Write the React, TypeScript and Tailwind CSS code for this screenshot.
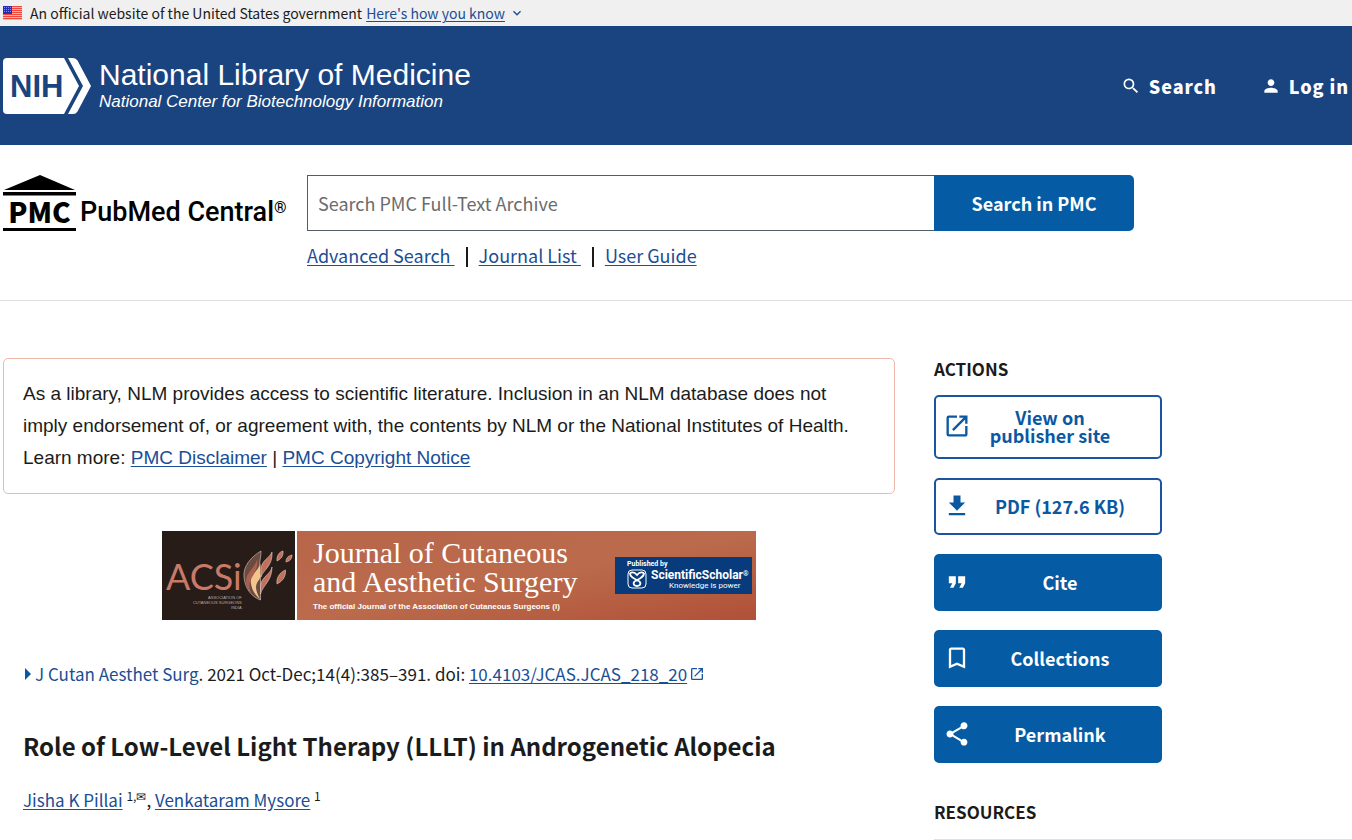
import React, { useState } from "react";
import type { IconType } from "react-icons";
import {
  MdBookmarkBorder,
  MdExpandMore,
  MdFileDownload,
  MdFormatQuote,
  MdOpenInNew,
  MdPerson,
  MdSearch,
  MdShare,
} from "react-icons/md";

interface Action {
  label: React.ReactNode;
  icon: IconType;
  outline?: boolean;
  labelStyle?: string;
}

const actions: Action[] = [
  { label: <>View on<br />publisher site</>, icon: MdOpenInNew, outline: true, labelStyle: "pl-4 pr-10" },
  { label: "PDF (127.6 KB)", icon: MdFileDownload, outline: true },
  { label: "Cite", icon: MdFormatQuote },
  { label: "Collections", icon: MdBookmarkBorder },
  { label: "Permalink", icon: MdShare },
];

const linkStyle = "text-[#1a4e95] underline underline-offset-2";

const FlagIcon = () => (
  <svg viewBox="0 0 19 14" className="w-[19px] h-3.5 shrink-0" aria-hidden="true">
    <rect width="19" height="14" fill="#fbe3df" />
    {[0, 2, 4, 6, 8, 10, 12].map(y => (
      <rect key={y} y={y} width="19" height="1.3" fill="#f0483c" />
    ))}
    <rect width="9" height="8" fill="#2a2fb0" />
    {[1, 3, 5].map(y =>
      [1, 3, 5, 7].map(x => <circle key={`${x}-${y}`} cx={x + 0.5} cy={y + 0.5} r="0.4" fill="#fff" />)
    )}
  </svg>
);

const NihLogo = () => (
  <svg viewBox="0 0 88 56" className="w-[88px] h-14 shrink-0" role="img" aria-label="NIH">
    <path d="M4 0H61L76 28L61 56H4Q0 56 0 52V4Q0 0 4 0Z" fill="#fff" />
    <path d="M65 0H70Q73 0 74.500 2.500L88 28L74.500 53.500Q73 56 70 56H65L80 28Z" fill="#fff" />
    <text x="7" y="39" fontFamily="'Liberation Sans', Arial, sans-serif" fontSize="31" fontWeight="700" fill="#1a4480">
      NIH
    </text>
  </svg>
);

const PmcRoof = () => (
  <svg viewBox="0 0 73 21" className="w-full h-[21px]" aria-hidden="true">
    <path d="M37 0L72 15H1Z" />
    <rect y="17" width="73" height="3.5" />
  </svg>
);

const FlameIcon = () => (
  <svg viewBox="0 0 52 52" className="w-[52px] h-[52px] shrink-0" aria-hidden="true">
    <g stroke="#d9cfc8" strokeWidth="0.6">
      <path d="M19 1C9 7 1 16 2 27C3 39 10 47 18.500 50V26C15 20 19 10 19 1Z" fill="#6b4a3f" />
      <path d="M30 2C28 8 19 10 19 20V27C21 20 31 16 30 2Z" fill="#c2705c" />
      <path d="M30 17C29 24 19 27 18.500 36V44C21 35 30 31 30 17Z" fill="#c2705c" />
      <path d="M35 11C34.500 6 37 2 41 1C41.500 6 39 9 35 11Z" fill="#c2705c" />
      <path d="M44 12C44 8 46 6 50 5C50 9 48 11 44 12Z" fill="#c2705c" />
      <path d="M35 34C34 28 38 22 43.500 20C44 26 41 31 35 34Z" fill="#c2705c" />
    </g>
    <path d="M18.500 13C17 21 7 24 9 34C10 40 13 45 18 49C14 41 13 37 15 33C16.500 30 18.500 29 18.500 25Z" fill="#f3c48c" />
    <path d="M15 9C14 17 4 22 4 31C4 36 6 40 9 43C5 32 10 28 13 22C15 18 16 14 15 9Z" fill="#a9624f" />
  </svg>
);

const ScholarIcon = () => (
  <svg viewBox="0 0 20 20" className="w-5 h-5 shrink-0" fill="none" stroke="#fff" aria-hidden="true">
    <rect x="1" y="1" width="18" height="18" rx="4" strokeWidth="1" />
    <path d="M3 4C3 9 7 8.500 10 11.500C13 8.500 17 9 17 4M3 4Q7 2 10 6Q13 2 17 4" strokeWidth="1.800" />
    <path d="M10 11C5 13 6 17 10 17C14 17 15 13 10 11Z" strokeWidth="1.800" />
  </svg>
);

const JournalBanner = () => (
  <a href="#journal" className="mt-[37px] mx-auto flex w-full max-w-[594px] h-[89px] text-white">
    <div className="w-[133px] shrink-0 bg-[#281c19] flex items-center pl-1">
      <div className="text-right mt-4">
        <div className="font-['Lato',sans-serif] text-[36px] leading-[38px] text-[#c87a68]">ACSi</div>
        <div className="font-['Liberation_Sans',Arial,sans-serif] text-[4px] leading-[5px] text-[#b9aaa5]">
          ASSOCIATION OF<br />CUTANEOUS SURGEONS<br />INDIA
        </div>
      </div>
      <FlameIcon />
    </div>
    <div className="ml-0.5 flex-1 bg-linear-to-br from-[#b8654a] via-[#bb6b4c] to-[#b05038] flex items-center justify-between pl-4 pr-1">
      <div>
        <div className="font-['Liberation_Serif',serif] text-[30px] leading-[29px] whitespace-nowrap">
          Journal of Cutaneous<br />and Aesthetic Surgery
        </div>
        <div className="mt-1 font-['Liberation_Sans',Arial,sans-serif] text-[8px] leading-[14px] font-bold whitespace-nowrap">
          The official Journal of the Association of Cutaneous Surgeons (I)
        </div>
      </div>
      <div className="w-[137px] h-[37px] bg-[#073b7c] pl-3 pt-0.5 font-['Roboto',sans-serif]">
        <div className="text-[7px] leading-[10px] font-bold">Published by</div>
        <div className="flex gap-1">
          <ScholarIcon />
          <div className="text-right">
            <div className="text-[12px] leading-[12px] font-bold whitespace-nowrap">
              ScientificScholar<sup className="text-[7px]">®</sup>
            </div>
            <div className="text-[8px] leading-[10px] pr-2">Knowledge is power</div>
          </div>
        </div>
      </div>
    </div>
  </a>
);

const ActionButton = ({ label, icon: Icon, outline, labelStyle = "pl-5 pr-6" }: Action) => (
  <button
    type="button"
    className={`flex items-center w-[228px] min-h-[57px] rounded-[5px] border-2 px-[7px] pt-[11px] pb-[13px] text-[18px] leading-[18px] font-bold ${
      outline ? "bg-white text-[#0b58a2] border-[#1a56a0]" : "bg-[#055ca5] text-white border-[#055ca5]"
    }`}
  >
    <Icon className="w-7 h-7 shrink-0" />
    <span className={`flex-1 whitespace-nowrap ${labelStyle}`}>{label}</span>
  </button>
);

const App = () => {
  const [query, setQuery] = useState("");

  return (
    <div className="min-h-screen bg-white text-[#1b1b1b] font-['Noto_Sans_CJK_SC',sans-serif]">
      {/* Government banner */}
      <div className="h-[26px] bg-[#f0f0f0] px-[3px] flex items-center text-[14px] leading-[20px]">
        <FlagIcon />
        <span className="ml-2">An official website of the United States government</span>
        <button type="button" className="ml-1 flex items-center gap-1 text-[#1a4e95]">
          <span className="underline underline-offset-2">Here's how you know</span>
          <MdExpandMore className="w-4 h-4" />
        </button>
      </div>

      {/* Header */}
      <header className="h-[119px] bg-[#1a4480] px-[3px] flex items-center justify-between text-white">
        <a href="#nlm" className="flex items-center gap-2">
          <NihLogo />
          <span className="font-['Liberation_Sans',Arial,sans-serif]">
            <span className="block text-[30px] leading-[32px]">National Library of Medicine</span>
            <span className="block text-[17px] leading-[22px] italic">National Center for Biotechnology Information</span>
          </span>
        </a>
        <nav className="flex items-center gap-11 text-[18px] leading-[24px] font-black tracking-wider">
          <a href="#search" className="flex items-center gap-2">
            <MdSearch className="w-5 h-5" />
            Search
          </a>
          <a href="#login" className="flex items-center gap-2">
            <MdPerson className="w-5 h-5" />
            Log in
          </a>
        </nav>
      </header>

      {/* PMC search */}
      <section className="flex items-start gap-[18px] px-[3px] pt-[30px] pb-[33px] border-b border-[#dfe1e2]">
        <a href="#pmc" className="flex items-end gap-1 w-[286px] text-black">
          <span className="w-[73px] flex flex-col">
            <PmcRoof />
            <span className="h-[35px] border-b-[3px] border-black text-center text-[28px] leading-[30px] font-black">
              PMC
            </span>
          </span>
          <span className="pb-[3px] font-['Roboto',sans-serif] text-[27px] leading-[32px] font-medium whitespace-nowrap">
            PubMed Central<sup className="text-[16px]">®</sup>
          </span>
        </a>
        <div className="flex-1 max-w-[827px] text-[18px]">
          <form className="flex" role="search" onSubmit={e => e.preventDefault()}>
            <input
              type="search"
              aria-label="Search PMC Full-Text Archive"
              placeholder="Search PMC Full-Text Archive"
              value={query}
              onChange={e => setQuery(e.target.value)}
              className="flex-1 min-w-0 h-14 border border-r-0 border-[#565c65] px-2.5 leading-[24px] placeholder:text-[#6b6b6b] outline-none"
            />
            <button type="submit" className="w-[200px] h-14 rounded-r-[5px] bg-[#055ca5] text-white font-bold">
              Search in PMC
            </button>
          </form>
          <div className="mt-3 flex items-center leading-[24px]">
            <a href="#advanced" className={`${linkStyle} whitespace-pre`}>Advanced Search </a>
            <span className="mx-[11px] w-0.5 h-5 self-end bg-[#1b1b1b]" />
            <a href="#journals" className={`${linkStyle} whitespace-pre`}>Journal List </a>
            <span className="mx-[11px] w-0.5 h-5 self-end bg-[#1b1b1b]" />
            <a href="#guide" className={linkStyle}>User Guide</a>
          </div>
        </div>
      </section>

      <div className="flex gap-[39px] pl-[3px] pt-[57px]">
        {/* Article */}
        <main className="flex-1 min-w-0">
          <div className="rounded-[5px] border border-[#efb8ab] py-[19px] pl-[19px] pr-8 font-['Liberation_Sans',Arial,sans-serif] text-[19px] leading-[32px]">
            As a library, NLM provides access to scientific literature. Inclusion in an NLM database does not imply
            endorsement of, or agreement with, the contents by NLM or the National Institutes of Health.
            <br />
            Learn more: <a href="#disclaimer" className={linkStyle}>PMC Disclaimer</a> |{" "}
            <a href="#copyright" className={linkStyle}>PMC Copyright Notice</a>
          </div>

          <article className="pl-5">
            <JournalBanner />

            <div className="mt-[42px] flex items-center text-[17px] leading-[24px]">
              <svg viewBox="0 0 6 12" className="ml-0.5 mr-1 w-1.5 h-3 fill-[#0b58a2]" aria-hidden="true">
                <path d="M0 0L6 6L0 12Z" />
              </svg>
              <p>
                <button type="button" className="text-[#1a4e95]">J Cutan Aesthet Surg</button>. 2021
                Oct-Dec;14(4):385–391. doi: <a href="#doi" className={linkStyle}>10.4103/JCAS.JCAS_218_20</a>
              </p>
              <MdOpenInNew className="ml-0.5 w-4 h-4 text-[#1a56a0]" />
            </div>
            <h1 className="mt-[43px] text-[24px] leading-[34px] font-bold">
              Role of Low-Level Light Therapy (LLLT) in Androgenetic Alopecia
            </h1>
            <p className="mt-[25px] text-[17px] leading-[24px]">
              <a href="#pillai" className={linkStyle}>Jisha K Pillai</a> <sup className="text-[12px]">1,✉</sup>,{" "}
              <a href="#mysore" className={linkStyle}>Venkataram Mysore</a> <sup className="text-[12px]">1</sup>
            </p>
          </article>
        </main>

        {/* Sidebar */}
        <aside className="w-[418px] shrink-0">
          <h2 className="text-[17px] leading-[22px] font-bold">ACTIONS</h2>
          <div className="mt-[15px] flex flex-col gap-[19px]">
            {actions.map((action, i) => (
              <ActionButton key={i} {...action} />
            ))}
          </div>
          <h2 className="mt-[38px] pb-4 border-b border-[#dfe1e2] text-[17px] leading-[22px] font-bold">RESOURCES</h2>
        </aside>
      </div>
    </div>
  );
};

export default App;
